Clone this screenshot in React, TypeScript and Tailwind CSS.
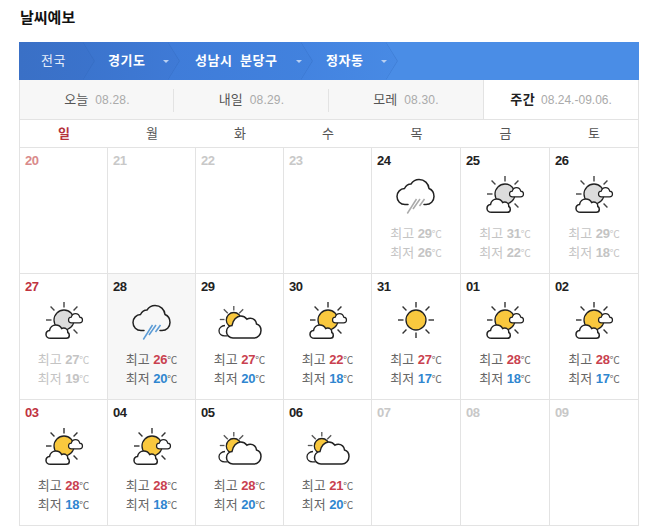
const font = "font-['Liberation_Sans','Noto_Sans_CJK_KR',sans-serif]";

function Rays({ color }: { color: string }) {
  return (
    <g stroke={color} strokeWidth="1.4">
      {[0, 45, 90, 135, 180, 225, 270, 315].map((a) => {
        const t = (a * Math.PI) / 180;
        const r1 = a % 90 === 0 ? 12.5 : 13.5;
        const r2 = a % 90 === 0 ? 18 : 19;
        return (
          <line
            key={a}
            x1={20 + r1 * Math.cos(t)}
            y1={20 + r1 * Math.sin(t)}
            x2={20 + r2 * Math.cos(t)}
            y2={20 + r2 * Math.sin(t)}
          />
        );
      })}
    </g>
  );
}

const smallCloud = "M27.5 22.800c-1.900 0-3-1.300-3-2.800 0-1.500 1.200-2.700 2.800-2.800.5-2 2.200-3.500 4.200-3.500 2.100 0 3.800 1.500 4.200 3.400 1.600.2 2.800 1.400 2.800 2.900 0 1.600-1.300 2.800-3 2.800z";
const lowCloud = "M6.500 38.300c-2.600 0-4.500-1.700-4.500-3.900 0-1.900 1.500-3.500 3.500-3.800.5-3.300 3.200-5.700 6.300-5.700 2.700 0 4.800 1.400 5.800 3.600.6-.3 1.200-.4 1.900-.4 2.400 0 4.300 1.700 4.300 3.900v.5c.9.500 1.500 1.400 1.500 2.700 0 1.700-1.300 3.100-3 3.100z";
const bigCloud = "M15 38c-3.600 0-6.500-2.800-6.500-6.300 0-3.200 2.400-5.800 5.500-6.200.8-5.200 4.500-9.500 8.800-9.500 2.400 0 4.600 1.200 6.200 3.200 1-.7 2.100-1 3.300-1 3.300 0 6 2.500 6.200 5.700 2.700.7 4.500 3.100 4.500 6.500 0 3.900-3.100 7.600-7 7.600z";

function PartlySun({ gray }: { gray?: boolean }) {
  return (
    <svg width="40" height="40" viewBox="0 0 40 40" fill="none">
      <Rays color={gray ? "#444" : "#333"} />
      <circle cx="20" cy="20" r="10" fill={gray ? "#dcdcdc" : "#f9c83e"} stroke="#222" strokeWidth="1.300" />
      <path d={smallCloud} fill="#fff" stroke="#222" strokeWidth="1.200" />
      <path d={lowCloud} fill="#fff" stroke="#222" strokeWidth="1.500" />
    </svg>
  );
}

function CloudSun() {
  return (
    <svg width="44" height="40" viewBox="0 0 44 40" fill="none">
      <g stroke="#555" strokeWidth="1.300">
        <line x1="15.800" y1="6" x2="15.800" y2="10.500" />
        <line x1="5.800" y1="9.300" x2="9.800" y2="13.300" />
        <line x1="25.200" y1="9.300" x2="21.200" y2="13.300" />
        <line x1="1.800" y1="19.500" x2="6.500" y2="19.500" />
      </g>
      <circle cx="15.800" cy="20" r="7.500" fill="#f9c83e" stroke="#222" strokeWidth="1.300" />
      <path d="M7 25.500c-3.500.3-6 2.500-6 5.300 0 3 2.500 5 5.500 5h3" fill="#fff" stroke="#222" strokeWidth="1.300" />
      <path d={bigCloud} fill="#fff" stroke="#222" strokeWidth="1.500" />
    </svg>
  );
}

function Sun() {
  return (
    <svg width="40" height="40" viewBox="0 0 40 40" fill="none">
      <Rays color="#333" />
      <circle cx="20" cy="20" r="10" fill="#f9c83e" stroke="#222" strokeWidth="1.300" />
    </svg>
  );
}

function Rain({ gray }: { gray?: boolean }) {
  const rain = gray ? "#aaa" : "#5b9bd5";
  return (
    <svg width="40" height="40" viewBox="0 0 40 40" fill="none">
      <path
        d="M12 30.500H9C4.500 30.500 1 27 1 22.500C1 18 4.500 14.700 8.500 14.500C10 11.500 12.500 10 15 10C17 7 20 5.500 23 5.500C28.500 5.500 32.500 9.500 33 14.500C35.500 15.500 38 18.500 38 22.500C38 27 34.500 30.500 30 30.500H28"
        stroke="#222"
        strokeWidth="1.500"
        strokeLinecap="round"
      />
      <g stroke={rain} strokeWidth="1.500">
        <line x1="20.500" y1="25" x2="11.300" y2="39.500" />
        <line x1="24" y1="25" x2="17" y2="35" />
        <line x1="28.500" y1="25" x2="23.500" y2="32" />
      </g>
    </svg>
  );
}

type Kind = "partly" | "partlyGray" | "cloud" | "sun" | "rain" | "rainGray";

function WeatherIcon({ kind }: { kind: Kind }) {
  if (kind === "partly") return <PartlySun />;
  if (kind === "partlyGray") return <PartlySun gray />;
  if (kind === "cloud") return <CloudSun />;
  if (kind === "sun") return <Sun />;
  if (kind === "rain") return <Rain />;
  return <Rain gray />;
}

type Day = { d: string; kind?: Kind; hi?: number; lo?: number; past?: boolean; sunday?: boolean; today?: boolean };

const days: Day[] = [
  { d: "20", past: true, sunday: true },
  { d: "21", past: true },
  { d: "22", past: true },
  { d: "23", past: true },
  { d: "24", kind: "rainGray", hi: 29, lo: 26, past: true },
  { d: "25", kind: "partlyGray", hi: 31, lo: 22, past: true },
  { d: "26", kind: "partlyGray", hi: 29, lo: 18, past: true },
  { d: "27", kind: "partlyGray", hi: 27, lo: 19, past: true, sunday: true },
  { d: "28", kind: "rain", hi: 26, lo: 20, today: true },
  { d: "29", kind: "cloud", hi: 27, lo: 20 },
  { d: "30", kind: "partly", hi: 22, lo: 18 },
  { d: "31", kind: "sun", hi: 27, lo: 17 },
  { d: "01", kind: "partly", hi: 28, lo: 18 },
  { d: "02", kind: "partly", hi: 28, lo: 17 },
  { d: "03", kind: "partly", hi: 28, lo: 18, sunday: true },
  { d: "04", kind: "partly", hi: 28, lo: 18 },
  { d: "05", kind: "cloud", hi: 28, lo: 20 },
  { d: "06", kind: "cloud", hi: 21, lo: 20 },
  { d: "07", past: true },
  { d: "08", past: true },
  { d: "09", past: true },
];

const weekdays = ["일", "월", "화", "수", "목", "금", "토"];

function Crumb({ label, bold, caret, width, from, to, z }: { label: string; bold?: boolean; caret?: boolean; width: string; from: string; to: string; z: string }) {
  return (
    <div className={`relative -mr-[12px] flex h-full shrink-0 items-center ${width} ${from} ${to} ${z} bg-gradient-to-r [clip-path:polygon(0_0,calc(100%-12px)_0,100%_50%,calc(100%-12px)_100%,0_100%)]`}>
      <span className={`text-[13px] tracking-[0.6px] [word-spacing:3px] ${bold ? "font-bold text-white" : "text-[#e3ecfa]"}`}>{label}</span>
      {caret && <span className="ml-auto mr-[11px] h-0 w-0 border-x-[3px] border-t-[3px] border-x-transparent border-t-[#b9d0f2]" />}
      <svg className="absolute right-0 top-0 h-full w-[12px]" viewBox="0 0 12 38" preserveAspectRatio="none" fill="none">
        <path d="M0 0L11.500 19L0 38" stroke="#2f62b4" strokeOpacity="0.3" />
      </svg>
    </div>
  );
}

function Tab({ label, date, width }: { label: string; date: string; width: string }) {
  return (
    <div className={`flex h-full items-center justify-center gap-[7px] border-b border-[#e3e3e3] bg-[#f7f7f7] ${width}`}>
      <span className="text-[13px] text-[#555]">{label}</span>
      <span className="text-[12px] tracking-[0.2px] text-[#aaa]">{date}</span>
    </div>
  );
}

function Cell({ day, col }: { day: Day; col: number }) {
  const dateColor = day.sunday
    ? day.past && !day.kind
      ? "text-[#d98a8a]"
      : "text-[#c0333f]"
    : day.past && !day.kind
      ? "text-[#c8c8c8]"
      : "text-[#222]";
  const dim = day.past;
  return (
    <div className={`flex h-[126px] flex-col border-b border-[#e3e3e3] ${col < 6 ? "border-r" : ""} ${day.today ? "bg-[#f7f7f7]" : "bg-white"}`}>
      <span className={`pl-[5px] pt-[5px] text-[13px] font-bold leading-[15px] tracking-[-0.4px] ${dateColor}`}>{day.d}</span>
      {day.kind && (
        <>
          <div className="mt-[6px] flex h-[40px] justify-center">
            <WeatherIcon kind={day.kind} />
          </div>
          <div className={`mt-[11px] flex flex-col items-center text-[13px] leading-[18px] ${dim ? "text-[#c4c4c4]" : "text-[#666]"}`}>
            <div>
              최고 <b className={`tracking-[-0.3px] ${dim ? "text-[#c4c4c4]" : "text-[#c9414f]"}`}>{day.hi}</b>
              <span className="text-[10px]">℃</span>
            </div>
            <div>
              최저 <b className={`tracking-[-0.3px] ${dim ? "text-[#c4c4c4]" : "text-[#2f86d0]"}`}>{day.lo}</b>
              <span className="text-[10px]">℃</span>
            </div>
          </div>
        </>
      )}
    </div>
  );
}

export default function App() {
  return (
    <div className={`h-[532px] w-[653px] overflow-hidden bg-white pl-[19px] ${font}`}>
      <h1 className="pl-px pt-[9px] text-[15px] font-bold leading-[18px] text-[#111]">날씨예보</h1>
      <div className="mt-[15px] w-[620px]">
        <div className="flex h-[38px] bg-[#4a8de6]">
          <Crumb label="전국" width="w-[76px] pl-[22px]" from="from-[#3a70c6]" to="to-[#3b73cc]" z="z-40" />
          <Crumb label="경기도" bold caret width="w-[97px] pl-[25px]" from="from-[#3b74cd]" to="to-[#3f7ad6]" z="z-30" />
          <Crumb label="성남시 분당구" bold caret width="w-[145px] pl-[27px]" from="from-[#3f7cd9]" to="to-[#4282de]" z="z-20" />
          <Crumb label="정자동" bold caret width="w-[97px] pl-[25px]" from="from-[#4383e0]" to="to-[#488ae4]" z="z-10" />
        </div>
        <div className="flex h-[40px] border-x border-[#e3e3e3]">
          <div className="relative flex">
            <Tab label="오늘" date="08.28." width="w-[154px]" />
            <span className="absolute left-[153px] top-[9px] h-[23px] w-px bg-[#e3e3e3]" />
            <Tab label="내일" date="08.29." width="w-[155px]" />
            <span className="absolute left-[308px] top-[9px] h-[23px] w-px bg-[#e3e3e3]" />
            <Tab label="모레" date="08.30." width="w-[154px]" />
          </div>
          <div className="flex flex-1 items-center justify-center gap-[6px] border-b border-l border-[#e3e3e3]">
            <span className="text-[13px] font-bold tracking-[0.5px] text-[#222]">주간</span>
            <span className="text-[12px] text-[#aaa]">08.24.-09.06.</span>
          </div>
        </div>
        <div className="grid grid-cols-[88px_88px_88px_88px_89px_89px_1fr] border-x border-[#e3e3e3]">
          {weekdays.map((w, i) => (
            <div key={w} className={`flex h-[28px] items-center justify-center border-b border-[#e3e3e3] text-[13px] ${i === 0 ? "font-bold text-[#b5333c]" : "text-[#555]"}`}>
              {w}
            </div>
          ))}
          {days.map((day, i) => (
            <Cell key={day.d} day={day} col={i % 7} />
          ))}
        </div>
      </div>
    </div>
  );
}
